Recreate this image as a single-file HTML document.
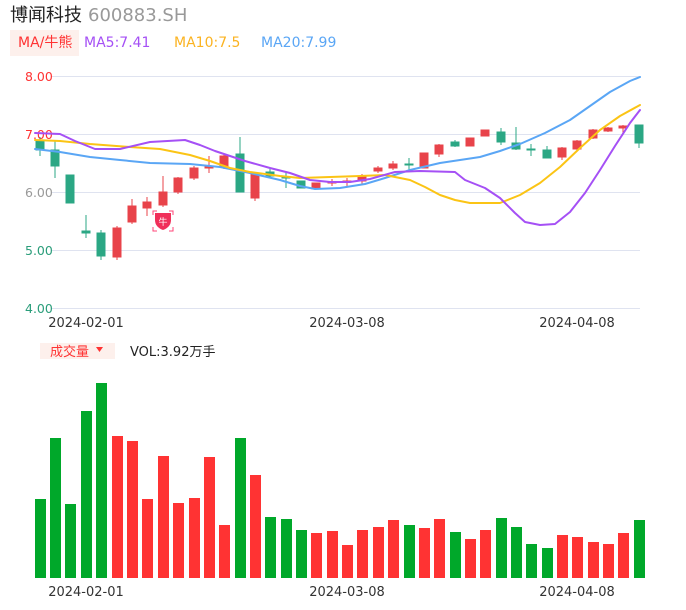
<!DOCTYPE html>
<html><head><meta charset="utf-8"><style>
body{margin:0;background:#fff;width:686px;height:606px;overflow:hidden;font-family:"DejaVu Sans","Noto Sans CJK SC",sans-serif}
</style></head><body>
<svg width="686" height="606" xmlns="http://www.w3.org/2000/svg" font-family="DejaVu Sans, Noto Sans CJK SC, sans-serif">
<text x="10" y="21" font-size="18" fill="#222" font-family="Noto Sans CJK SC, sans-serif">博闻科技</text>
<text x="88" y="21" font-size="18" fill="#999">600883.SH</text>
<rect x="10" y="30" width="69" height="26" fill="#fdf0ec"/>
<text x="18" y="47" font-size="14" fill="#f33">MA/牛熊</text>
<text x="84" y="47" font-size="14" fill="#a550f5">MA5:7.41</text>
<text x="174" y="47" font-size="14" fill="#fbb321">MA10:7.5</text>
<text x="261" y="47" font-size="14" fill="#5aa6f5">MA20:7.99</text>
<g stroke="#dfe3f0" stroke-width="1">
<line x1="52" y1="76.5" x2="640" y2="76.5"/><line x1="52" y1="134.5" x2="640" y2="134.5"/><line x1="52" y1="192.5" x2="640" y2="192.5"/><line x1="52" y1="250.5" x2="640" y2="250.5"/><line x1="52" y1="308.5" x2="640" y2="308.5"/>
</g>
<g font-size="12.5">
<text x="25" y="81" fill="#f33">8.00</text><text x="25" y="139" fill="#f33">7.00</text><text x="25" y="197" fill="#999">6.00</text><text x="25" y="255" fill="#2a9d7a">5.00</text><text x="25" y="313" fill="#2a9d7a">4.00</text>
</g>
<g fill="#2ba784" stroke="#2ba784">
<line x1="40" y1="137" x2="40" y2="156"/><rect x="36" y="141" width="8" height="9"/>
<line x1="55" y1="140" x2="55" y2="178"/><rect x="51" y="150" width="8" height="16"/>
<rect x="66" y="175" width="8" height="28"/>
<line x1="86" y1="215" x2="86" y2="238"/><rect x="82" y="231" width="8" height="2"/>
<line x1="101" y1="230" x2="101" y2="260"/><rect x="97" y="233" width="8" height="23"/>
<line x1="240" y1="137" x2="240" y2="192"/><rect x="236" y="154" width="8" height="38"/>
<line x1="270" y1="169" x2="270" y2="178"/><rect x="266" y="172" width="8" height="4"/>
<line x1="286" y1="172" x2="286" y2="188"/><rect x="282" y="177" width="8" height="1"/>
<rect x="297" y="181" width="8" height="7"/>
<line x1="409" y1="158" x2="409" y2="171"/><rect x="405" y="164" width="8" height="1"/>
<line x1="455" y1="140" x2="455" y2="147"/><rect x="451" y="142" width="8" height="4"/>
<line x1="501" y1="128" x2="501" y2="145"/><rect x="497" y="132" width="8" height="10"/>
<line x1="516" y1="127" x2="516" y2="150"/><rect x="512" y="143" width="8" height="6"/>
<line x1="531" y1="144" x2="531" y2="156"/><rect x="527" y="149" width="8" height="1"/>
<line x1="547" y1="146" x2="547" y2="158"/><rect x="543" y="150" width="8" height="8"/>
<line x1="639" y1="125" x2="639" y2="148"/><rect x="635" y="125" width="8" height="18"/>
</g>
<g fill="#e8434a" stroke="#e8434a">
<line x1="117" y1="226" x2="117" y2="260"/><rect x="113" y="228" width="8" height="29"/>
<line x1="132" y1="199" x2="132" y2="224"/><rect x="128" y="206" width="8" height="16"/>
<line x1="147" y1="197" x2="147" y2="216"/><rect x="143" y="202" width="8" height="6"/>
<line x1="163" y1="176" x2="163" y2="207"/><rect x="159" y="192" width="8" height="13"/>
<line x1="178" y1="177" x2="178" y2="194"/><rect x="174" y="178" width="8" height="14"/>
<line x1="194" y1="166" x2="194" y2="180"/><rect x="190" y="168" width="8" height="10"/>
<line x1="209" y1="156" x2="209" y2="173"/><rect x="205" y="166" width="8" height="2"/>
<line x1="224" y1="154" x2="224" y2="169"/><rect x="220" y="156" width="8" height="11"/>
<line x1="255" y1="172" x2="255" y2="201"/><rect x="251" y="174" width="8" height="24"/>
<rect x="312" y="183" width="8" height="6"/>
<line x1="332" y1="179" x2="332" y2="186"/><rect x="328" y="182" width="8" height="1"/>
<line x1="347" y1="178" x2="347" y2="186"/><rect x="343" y="181" width="8" height="1"/>
<line x1="362" y1="174" x2="362" y2="184"/><rect x="358" y="177" width="8" height="4"/>
<line x1="378" y1="166" x2="378" y2="173"/><rect x="374" y="168" width="8" height="3"/>
<line x1="393" y1="161" x2="393" y2="170"/><rect x="389" y="164" width="8" height="4"/>
<rect x="420" y="153" width="8" height="15"/>
<line x1="439" y1="144" x2="439" y2="157"/><rect x="435" y="145" width="8" height="9"/>
<rect x="466" y="138" width="8" height="8"/>
<rect x="481" y="130" width="8" height="6"/>
<line x1="562" y1="147" x2="562" y2="160"/><rect x="558" y="148" width="8" height="9"/>
<line x1="577" y1="140" x2="577" y2="150"/><rect x="573" y="141" width="8" height="8"/>
<line x1="593" y1="129" x2="593" y2="139"/><rect x="589" y="130" width="8" height="8"/>
<line x1="608" y1="127" x2="608" y2="132"/><rect x="604" y="128" width="8" height="3"/>
<line x1="623" y1="125" x2="623" y2="134"/><rect x="619" y="126" width="8" height="2"/>
</g>
<g fill="none" stroke-width="2" stroke-linejoin="round" stroke-linecap="round">
<polyline stroke="#5aa6f5" points="35,149 60,152 90,157 120,160 150,163 190,164 220,167 250,173 280,180 300,186 315,189 340,188 365,184 385,178 410,170 440,163 460,160 480,157 500,151 520,144 545,133 570,120 590,106 610,92 630,81 640,77"/>
<polyline stroke="#fbc415" points="35,140 60,141 90,144 130,147 160,149 190,155 210,161 230,168 250,172 280,176 300,178 330,177 360,176 385,175 410,180 425,187 440,195 455,200 470,203 500,203 520,195 540,183 560,167 580,148 600,130 620,116 640,105"/>
<polyline stroke="#a550f5" points="35,133 60,134 75,141 95,149 120,149 150,142 185,140 200,145 215,151 245,161 270,168 290,173 310,180 330,182 350,182 370,179 395,172 420,171 455,172 465,180 485,188 500,198 515,213 525,222 540,225 555,224 570,212 585,193 600,170 615,146 630,123 640,110"/>
</g>
<g>
<path d="M155,213 h16 v7 q0,7 -8,10 q-8,-3 -8,-10z" fill="#f0305a"/>
<text x="163" y="225" font-size="9" fill="#fff" text-anchor="middle">牛</text>
<path d="M153,215 v-4 h4 M169,211 h4 v4 M173,227 v4 h-4 M157,231 h-4 v-4" stroke="#f47" fill="none" stroke-width="1"/>
</g>
<g font-size="13" fill="#333" text-anchor="middle">
<text x="86" y="327">2024-02-01</text><text x="347" y="327">2024-03-08</text><text x="577" y="327">2024-04-08</text>
<text x="86" y="596">2024-02-01</text><text x="347" y="596">2024-03-08</text><text x="577" y="596">2024-04-08</text>
</g>
<rect x="40" y="343" width="75" height="16" fill="#fdf0ec"/>
<text x="50" y="356" font-size="13" fill="#f33">成交量</text>
<path d="M96,347 h7 l-3.5,5z" fill="#f33"/>
<text x="130" y="356" font-size="13" fill="#222">VOL:3.92万手</text>
<g fill="#00a82a">
<rect x="35" y="499" width="11" height="79"/><rect x="50" y="438" width="11" height="140"/><rect x="65" y="504" width="11" height="74"/><rect x="81" y="411" width="11" height="167"/><rect x="96" y="383" width="11" height="195"/>
<rect x="235" y="438" width="11" height="140"/><rect x="265" y="517" width="11" height="61"/><rect x="281" y="519" width="11" height="59"/><rect x="296" y="530" width="11" height="48"/>
<rect x="404" y="525" width="11" height="53"/><rect x="450" y="532" width="11" height="46"/><rect x="496" y="518" width="11" height="60"/><rect x="511" y="527" width="11" height="51"/><rect x="526" y="544" width="11" height="34"/><rect x="542" y="548" width="11" height="30"/><rect x="634" y="520" width="11" height="58"/>
</g>
<g fill="#ff3333">
<rect x="112" y="436" width="11" height="142"/><rect x="127" y="441" width="11" height="137"/><rect x="142" y="499" width="11" height="79"/><rect x="158" y="456" width="11" height="122"/><rect x="173" y="503" width="11" height="75"/><rect x="189" y="498" width="11" height="80"/><rect x="204" y="457" width="11" height="121"/><rect x="219" y="525" width="11" height="53"/>
<rect x="250" y="475" width="11" height="103"/>
<rect x="311" y="533" width="11" height="45"/><rect x="327" y="531" width="11" height="47"/><rect x="342" y="545" width="11" height="33"/><rect x="357" y="530" width="11" height="48"/><rect x="373" y="527" width="11" height="51"/><rect x="388" y="520" width="11" height="58"/>
<rect x="419" y="528" width="11" height="50"/><rect x="434" y="519" width="11" height="59"/><rect x="465" y="539" width="11" height="39"/><rect x="480" y="530" width="11" height="48"/>
<rect x="557" y="535" width="11" height="43"/><rect x="572" y="537" width="11" height="41"/><rect x="588" y="542" width="11" height="36"/><rect x="603" y="544" width="11" height="34"/><rect x="618" y="533" width="11" height="45"/>
</g>
</svg>
</body></html>
